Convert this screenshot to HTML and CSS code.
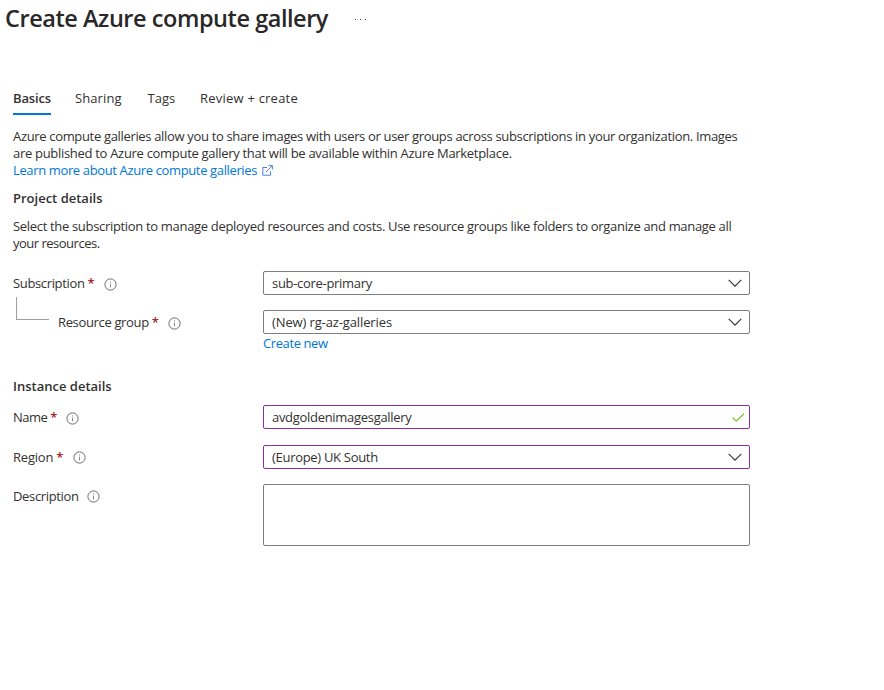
FILE: index.html
```html
<!DOCTYPE html>
<html lang="en">
<head>
<meta charset="utf-8">
<title>Create Azure compute gallery</title>
<link rel="stylesheet" href="styles.css">
</head>
<body>
<svg class="defs" aria-hidden="true">
  <symbol id="info" viewBox="0 0 13 13"><circle cx="6.5" cy="6.5" r="5.6" fill="none" stroke="#6b6b6b"/><path d="M6.5 5.6V9.4M6.5 3.4V4.5" fill="none" stroke="#8a8a8a"/></symbol>
  <symbol id="chevron" viewBox="0 0 14 8"><path d="M.7.8 7 7.1 13.3.8" fill="none" stroke="#323130" stroke-width="1.1"/></symbol>
</svg>
<header class="title-bar">
  <h1>Create Azure compute gallery</h1>
  <button class="more" aria-label="More"><i></i><i></i><i></i></button>
</header>
<main>
  <nav class="tabs">
    <a class="tab active"><span>Basics</span></a>
    <a class="tab sharing">Sharing</a>
    <a class="tab tags">Tags</a>
    <a class="tab review">Review + create</a>
  </nav>
  <p class="intro"><span class="l1">Azure compute galleries allow you to share images with users or user groups across subscriptions in your organization. Images</span><br><span class="l2">are published to Azure compute gallery that will be available within Azure Marketplace.</span><br><a class="link learn">Learn more about Azure compute galleries</a><svg class="external" viewBox="0 0 11 11"><path d="M5 2.5H.8v7.7h7.7V6.5M6.5.6h3.9v3.9M10.2.8 4 7" fill="none" stroke="#4a7fe0"/></svg></p>
  <h2>Project details</h2>
  <p class="project"><span class="l3">Select the subscription to manage deployed resources and costs. Use resource groups like folders to organize and manage all</span><br><span class="l4">your resources.</span></p>
  <section class="project-fields">
    <div class="row">
      <label><span>Subscription</span><b>*</b><svg class="info"><use href="#info"/></svg></label>
      <div class="field"><span>sub-core-primary</span><svg class="chevron"><use href="#chevron"/></svg></div>
    </div>
    <div class="row nested">
      <div class="elbow"></div>
      <label><span>Resource group</span><b>*</b><svg class="info"><use href="#info"/></svg></label>
      <div class="field"><span class="group-value">(New) rg-az-galleries</span><svg class="chevron"><use href="#chevron"/></svg></div>
    </div>
    <a class="link create">Create new</a>
  </section>
  <h2 class="instance">Instance details</h2>
  <section class="instance-fields">
    <div class="row name">
      <label><span>Name</span><b>*</b><svg class="info"><use href="#info"/></svg></label>
      <div class="field edited"><span>avdgoldenimagesgallery</span><svg class="check" viewBox="0 0 13 9"><path d="M.6 4.7 4.2 8.1 12.2.7" fill="none" stroke="#6bb700" stroke-width="1.1"/></svg></div>
    </div>
    <div class="row region">
      <label><span>Region</span><b>*</b><svg class="info"><use href="#info"/></svg></label>
      <div class="field edited"><span>(Europe) UK South</span><svg class="chevron"><use href="#chevron"/></svg></div>
    </div>
    <div class="row description">
      <label><span>Description</span><svg class="info"><use href="#info"/></svg></label>
      <div class="field area"></div>
    </div>
  </section>
</main>
</body>
</html>
```
FILE: styles.css
```css
* { box-sizing: border-box; }
body { margin: 0; background: #fff; color: #323130; font: 13px/17px "Open Sans", "Noto Sans", sans-serif; letter-spacing: -0.3px; white-space: nowrap; }
.defs { position: absolute; width: 0; height: 0; }
svg { display: block; flex: none; }
h1, h2, p { margin: 0; }
h1 { width: 323px; padding-bottom: 1px; color: #292827; font-size: 23.5px; line-height: 32px; font-weight: 600; letter-spacing: -0.45px; }
.title-bar { display: flex; align-items: center; height: 37px; padding-left: 5px; }
.more { display: flex; gap: 4px; width: 12px; margin: 2px 0 0 27px; padding: 0; border: 0; background: none; }
.more i { width: 1px; height: 1px; background: #323130; }
main { width: 750px; padding-left: 13px; }
.tabs { display: flex; height: 26px; margin-top: 52px; line-height: 19px; letter-spacing: 0; }
.tab.active { width: 38px; margin-right: 24px; border-bottom: 2px solid #0078d4; font-weight: 600; letter-spacing: -0.15px; }
.tab.sharing { width: 72.5px; letter-spacing: 0.1px; }
.tab.tags { width: 52.5px; }
.tab.review { letter-spacing: 0.22px; }
.intro { margin-top: 13px; }
.l1 { letter-spacing: -0.333px; }
.l2 { letter-spacing: -0.3px; }
.l3 { letter-spacing: -0.321px; }
.l4 { letter-spacing: -0.5px; }
.link { color: #0078d4; }
.learn { display: inline-block; letter-spacing: -0.365px; }
.external { display: inline-block; width: 11px; height: 11px; margin-left: 5px; vertical-align: -1px; }
h2 { margin-top: 11px; font-size: 13px; line-height: 17px; font-weight: 600; letter-spacing: 0; }
.project { margin-top: 11px; }
.project-fields { margin-top: 19px; }
.row { display: flex; align-items: flex-start; }
label { display: flex; align-items: center; width: 250px; height: 24px; letter-spacing: -0.35px; }
label b { margin-left: 3px; color: #a4262c; font-weight: 600; }
label .info { width: 13px; height: 13px; margin: 2px 0 0 9.5px; }
.field { display: flex; align-items: center; justify-content: space-between; width: 487px; height: 24px; padding: 0 7px 0 8px; border: 1px solid #7f7d7b; border-radius: 2px; }
.edited { border-color: #8a2da5; }
.group-value { letter-spacing: -0.12px; }
.chevron { width: 14px; height: 8px; }
.check { width: 13px; height: 9px; margin-right: -2.5px; }
.area { height: 62px; }
.nested { margin-top: 15px; }
.elbow { width: 33px; height: 23px; margin: -13px 9px 0 3px; border: solid #a19f9d; border-width: 0 0 1px 1px; }
.nested label { width: 205px; }
.nested .info { margin-left: 9px; }
.create { display: block; margin: 1px 0 0 250px; letter-spacing: -0.4px; }
h2.instance { margin-top: 26px; }
.instance-fields { margin-top: 10px; }
.name label { letter-spacing: -0.5px; }
.region { margin: 16px 0 15px; }
.region label { letter-spacing: -0.2px; }
.region .info { margin: 0 0 0 9.5px; }
.description .info { margin: 0 0 0 8px; }
```
